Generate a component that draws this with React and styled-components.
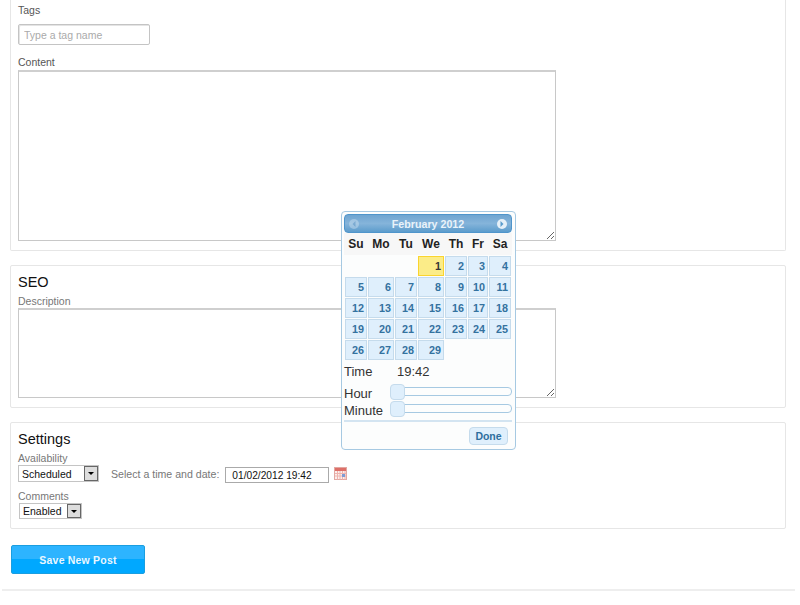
import React from 'react';
import styled, { createGlobalStyle } from 'styled-components';

const GlobalStyle = createGlobalStyle`
  html, body {
    margin: 0;
    padding: 0;
    background: #fff;
    font-family: "Liberation Sans", Arial, sans-serif;
  }
`;

const WEEK_DAYS = ['Su', 'Mo', 'Tu', 'We', 'Th', 'Fr', 'Sa'];

const FEBRUARY = [null, null, null, 1, 2, 3, 4];
for (let day = 5; day <= 29; day++) FEBRUARY.push(day);

const CalendarIcon = () => (
  <CalIconWrap viewBox="0 0 14 14" width="14" height="14">
    <rect x="0.5" y="0.5" width="12" height="12" fill="#fbeeec" stroke="#e2a8a2" />
    <rect x="1" y="1" width="11" height="3" fill="#dd6f68" />
    <path d="M1 6.5h11M1 9h11M3.5 4v8.5M6 4v8.5M8.5 4v8.5M11 4v8.5" stroke="#eeb4ae" strokeWidth="1" />
    <rect x="8" y="7" width="3" height="3" fill="#7d9bd4" />
  </CalIconWrap>
);

const DatePicker = () => (
  <Picker>
    <PickerHeader>
      <NavButton $faded>
        <svg viewBox="0 0 8 8" width="8" height="8">
          <path d="M5.5 1 2.5 4l3 3z" fill="#6f9cc4" />
        </svg>
      </NavButton>
      <PickerTitle>February 2012</PickerTitle>
      <NavButton>
        <svg viewBox="0 0 8 8" width="8" height="8">
          <path d="M2.5 1l3 3-3 3z" fill="#5c9ccc" />
        </svg>
      </NavButton>
    </PickerHeader>
    <WeekRow>
      {WEEK_DAYS.map((d) => (
        <WeekDay key={d}>{d}</WeekDay>
      ))}
    </WeekRow>
    <DayGrid>
      {FEBRUARY.map((day, i) =>
        day ? (
          <DayCell key={i} $today={day === 1}>{day}</DayCell>
        ) : (
          <span key={i} />
        )
      )}
    </DayGrid>
    <TimeRow>
      <TimeLabel>Time</TimeLabel>
      <span>19:42</span>
    </TimeRow>
    <SliderRow>
      <SliderLabel>Hour</SliderLabel>
      <SliderTrack><SliderHandle /></SliderTrack>
    </SliderRow>
    <SliderRow>
      <SliderLabel>Minute</SliderLabel>
      <SliderTrack><SliderHandle /></SliderTrack>
    </SliderRow>
    <PickerFooter>
      <DoneButton>Done</DoneButton>
    </PickerFooter>
  </Picker>
);

const App = () => (
  <>
    <GlobalStyle />
    <Page>
      <Panel $height={251} $open>
        <TagsLabel>Tags</TagsLabel>
        <TagInput placeholder="Type a tag name" />
        <ContentLabel>Content</ContentLabel>
        <BigTextarea $height={171} />
      </Panel>

      <Panel $height={143}>
        <PanelTitle>SEO</PanelTitle>
        <DescLabel>Description</DescLabel>
        <BigTextarea $height={90} />
      </Panel>

      <Panel $height={107}>
        <PanelTitle>Settings</PanelTitle>
        <DescLabel>Availability</DescLabel>
        <AvailabilityRow>
          <FakeSelect $width={81} $height={17}>
            <span>Scheduled</span>
            <SelectArrow />
          </FakeSelect>
          <DateLabel>Select a time and date:</DateLabel>
          <DateInput defaultValue="01/02/2012 19:42" />
          <CalendarIcon />
        </AvailabilityRow>
        <CommentsLabel>Comments</CommentsLabel>
        <CommentsRow>
          <FakeSelect $width={63} $height={16}>
            <span>Enabled</span>
            <SelectArrow />
          </FakeSelect>
        </CommentsRow>
      </Panel>

      <SaveButton>Save New Post</SaveButton>
      <BottomRule />
      <DatePicker />
    </Page>
  </>
);

export default App;

const Page = styled.div`
  position: relative;
  width: 800px;
  height: 605px;
  overflow: hidden;
  box-sizing: border-box;
  padding-left: 10px;
`;

const Panel = styled.section`
  box-sizing: border-box;
  width: 776px;
  height: ${(props) => props.$height}px;
  margin-bottom: 14px;
  padding: ${(props) => (props.$open ? '0 7px' : '8px 7px 0')};
  border: 1px solid #e6e6e6;
  border-top: ${(props) => (props.$open ? 'none' : '1px solid #e6e6e6')};
  border-radius: ${(props) => (props.$open ? '0 0 2px 2px' : '2px')};
`;

const Label = styled.label`
  display: block;
  font-size: 10.5px;
  line-height: 14px;
  color: #777;
`;

const TagsLabel = styled(Label)`
  padding-top: 3px;
  color: #555;
`;

const ContentLabel = styled(Label)`
  margin-top: 10px;
  margin-bottom: 1px;
  color: #555;
`;

const DescLabel = styled(Label)`
  margin-top: 3px;
`;

const CommentsLabel = styled(Label)`
  margin-top: 7px;
`;

const TagInput = styled.input`
  display: block;
  box-sizing: border-box;
  width: 132px;
  height: 21px;
  margin: 7px 0 0 0;
  padding: 0 5px;
  border: 1px solid #c4c4c4;
  box-shadow: inset 1px 1px 0 #e4e4e4;
  border-radius: 2px;
  font: 10.5px "Liberation Sans", Arial, sans-serif;
  &::placeholder {
    color: #aaa;
  }
`;

const BigTextarea = styled.textarea`
  display: block;
  box-sizing: border-box;
  width: 538px;
  height: ${(props) => props.$height}px;
  margin: 0;
  border: 1px solid #c8c8c8;
  border-top: 2px solid #cfcfcf;
  background: #fff;
`;

const PanelTitle = styled.h2`
  margin: 0;
  font-size: 14.5px;
  line-height: 17px;
  font-weight: normal;
  color: #111;
`;

const AvailabilityRow = styled.div`
  display: flex;
  align-items: flex-start;
  height: 17px;
`;

const CommentsRow = styled.div`
  display: flex;
  height: 16px;
  padding-left: 1px;
`;

const FakeSelect = styled.div`
  box-sizing: border-box;
  display: flex;
  align-items: center;
  justify-content: space-between;
  width: ${(props) => props.$width}px;
  height: ${(props) => props.$height}px;
  padding-left: 3px;
  border: 1px solid #c4c4c4;
  font-size: 10.5px;
  color: #111;
`;

const SelectArrow = styled.span`
  box-sizing: border-box;
  display: flex;
  align-items: center;
  justify-content: center;
  width: 14px;
  height: 100%;
  background: #ddd;
  border: 1px solid #666;
  &::after {
    content: '';
    border: 3px solid transparent;
    border-top: 3px solid #000;
    border-bottom: none;
  }
`;

const DateLabel = styled.span`
  margin: 2px 0 0 12px;
  font-size: 10.6px;
  line-height: 14px;
  color: #777;
`;

const DateInput = styled.input`
  box-sizing: border-box;
  width: 104px;
  height: 16px;
  margin: 2px 0 0 6px;
  padding: 0 6px;
  border: 1px solid #aaa;
  font: 10.2px "Liberation Sans", Arial, sans-serif;
  color: #111;
`;

const CalIconWrap = styled.svg`
  margin: 2px 0 0 5px;
`;

const SaveButton = styled.button`
  display: block;
  box-sizing: border-box;
  width: 134px;
  height: 29px;
  margin: 16px 0 0 1px;
  border: 1px solid #1a9ee0;
  border-radius: 2px;
  background: linear-gradient(#2db4ff 0 50%, #00a8ff 50% 100%);
  color: #eaf7ff;
  font: bold 10.5px "Liberation Sans", Arial, sans-serif;
  letter-spacing: 0.2px;
`;

const BottomRule = styled.div`
  width: 793px;
  height: 2px;
  margin: 15px 0 0 -8px;
  background: #eee;
`;

const Picker = styled.div`
  position: absolute;
  left: 341px;
  top: 211px;
  box-sizing: border-box;
  width: 175px;
  height: 239px;
  padding: 2px;
  border: 1px solid #a6c9e2;
  border-radius: 4px;
  background: #fcfdfd;
`;

const PickerHeader = styled.div`
  box-sizing: border-box;
  display: flex;
  align-items: center;
  justify-content: space-between;
  width: 168px;
  height: 19px;
  padding: 0 4px;
  border: 1px solid #4f95cb;
  border-radius: 4px;
  background: linear-gradient(#6fa5d1, #85b4da 50%, #5c9ccc);
`;

const PickerTitle = styled.span`
  font-size: 10.7px;
  font-weight: bold;
  color: #eaf3fa;
`;

const NavButton = styled.span`
  display: flex;
  align-items: center;
  justify-content: center;
  width: 10px;
  height: 10px;
  border-radius: 50%;
  background: #e6f0f8;
  opacity: ${(props) => (props.$faded ? 0.35 : 1)};
`;

const WeekRow = styled.div`
  display: grid;
  grid-template-columns: 22px 26px 22px 26px 22px 20px 22px;
  column-gap: 1px;
  width: 168px;
  height: 22px;
  padding-left: 1px;
  box-sizing: border-box;
  background: #f7f7f7;
`;

const WeekDay = styled.span`
  align-self: center;
  text-align: center;
  font-size: 12px;
  font-weight: bold;
  color: #222;
`;

const DayGrid = styled.div`
  display: grid;
  grid-template-columns: 22px 26px 22px 26px 22px 20px 22px;
  grid-auto-rows: 20px;
  gap: 1px;
  padding-left: 1px;
  margin-top: 1px;
`;

const DayCell = styled.span`
  box-sizing: border-box;
  padding-right: 2px;
  border: 1px solid ${(props) => (props.$today ? '#fad42e' : '#c5dbec')};
  background: ${(props) => (props.$today ? '#fbec88' : '#dfeffc')};
  color: ${(props) => (props.$today ? '#363636' : '#34729f')};
  font-size: 10.8px;
  font-weight: bold;
  line-height: 18px;
  text-align: right;
`;

const TimeRow = styled.div`
  display: flex;
  height: 18px;
  margin: 3px 0;
  font-size: 13px;
  line-height: 18px;
  color: #333;
`;

const TimeLabel = styled.span`
  width: 53px;
`;

const SliderRow = styled.div`
  display: flex;
  align-items: flex-start;
  height: 17px;
`;

const SliderLabel = styled.span`
  width: 46px;
  margin-top: 2px;
  font-size: 13px;
  line-height: 16px;
  color: #333;
`;

const SliderTrack = styled.div`
  position: relative;
  box-sizing: border-box;
  width: 122px;
  height: 9px;
  margin-top: 3px;
  border: 1px solid #a6c9e2;
  border-radius: 4px;
  background: #fcfdfd;
`;

const SliderHandle = styled.span`
  position: absolute;
  left: -1px;
  top: -4px;
  box-sizing: border-box;
  width: 15px;
  height: 16px;
  border: 1px solid #c5dbec;
  border-radius: 4px;
  background: #dfeffc;
`;

const PickerFooter = styled.div`
  display: flex;
  justify-content: flex-end;
  width: 168px;
  margin-top: 2px;
  padding-top: 5px;
  padding-right: 4px;
  box-sizing: border-box;
  border-top: 2px solid #d3e4f1;
`;

const DoneButton = styled.button`
  box-sizing: border-box;
  width: 39px;
  height: 18px;
  padding: 0;
  border: 1px solid #c5dbec;
  border-radius: 4px;
  background: #dfeffc;
  color: #2e6e9e;
  font: bold 10.5px "Liberation Sans", Arial, sans-serif;
`;
